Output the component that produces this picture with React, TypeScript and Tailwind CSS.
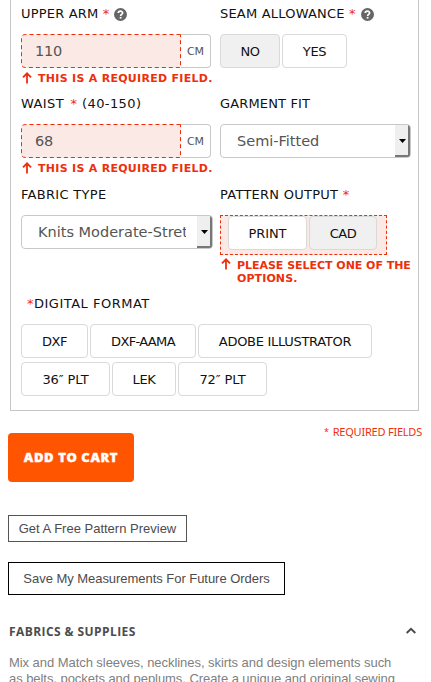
import React from 'react';

const verdana = "font-['DejaVu_Sans',Verdana,sans-serif]";

function Star() {
  return <span className="text-[#ee2f0c]">*</span>;
}

function Label({ children, className = '' }: { children: React.ReactNode; className?: string }) {
  return <div className={`flex h-5 items-center whitespace-pre text-[13px] leading-5 text-[#111] ${className}`}>{children}</div>;
}

function Help() {
  return (
    <svg className="ml-1 mt-px h-[13px] w-[13px]" viewBox="0 0 13 13">
      <circle cx="6.5" cy="6.5" r="6.5" fill="#666" />
      <path d="M4.3 5.1C4.3 2.6 8.6 2.6 8.6 5C8.6 6.4 6.6 6.4 6.6 7.9" fill="none" stroke="#fff" strokeWidth="1.7" />
      <path d="M5.7 8.9h1.8v1.7H5.7z" fill="#fff" />
    </svg>
  );
}

function Arrow() {
  return (
    <svg className="-mt-px h-3 w-[10px] shrink-0" viewBox="0 0 10 12">
      <path d="M5 11.5V1.5M1 5.4L5 1.3L9 5.4" fill="none" stroke="#ee2f0c" strokeWidth="1.8" />
    </svg>
  );
}

function Option({ children, className = '' }: { children: React.ReactNode; className?: string }) {
  return (
    <button className={`flex h-[34px] shrink-0 items-center justify-center whitespace-nowrap rounded-[4px] border border-[#d9d9d9] pt-[2px] text-[13px] text-[#111] ${className}`}>
      {children}
    </button>
  );
}

function Measure({ value }: { value: string }) {
  return (
    <div className="flex h-[34px] w-[190px]">
      <div className="relative flex w-[160px] items-center rounded-l-[4px] bg-[#fbe9e5] pl-[14px] pt-[2px] text-[14.5px] tracking-[-0.2px] text-[#555]">
        <svg className="absolute inset-0 h-full w-full" viewBox="0 0 160 34">
          <path d="M159.5 .5H4.5Q.5 .5 .5 4.5V29.5Q.5 33.5 4.5 33.5H159.5Z" fill="none" stroke="#ee2f0c" strokeDasharray="4 3" />
        </svg>
        {value}
      </div>
      <div className="flex w-[30px] items-center rounded-r-[4px] border border-l-0 border-[#c8c8c8] pl-[6px] pt-[3px] text-[11px] tracking-[-0.2px] text-[#555]">CM</div>
    </div>
  );
}

function Required() {
  return (
    <div className="flex h-5 items-center gap-[6px] pl-[1px] text-[11px] font-bold text-[#ee2f0c]">
      <Arrow />
      <span className="whitespace-nowrap pt-[2px] tracking-[0.29px]">THIS IS A REQUIRED FIELD.</span>
    </div>
  );
}

function Select({ value, className = '' }: { value: string; className?: string }) {
  return (
    <div className={`flex h-[34px] items-stretch overflow-hidden rounded-[4px] border border-[#c8c8c8] ${className}`}>
      <div className="flex min-w-0 flex-1 items-center overflow-hidden whitespace-nowrap pt-[2px] text-[14.5px] text-[#555]">
        <span>{value}</span>
      </div>
      <div className="ml-[11px] flex w-[15px] items-center justify-center border-b-2 border-r-2 border-[#777] bg-[#efefef] pl-px pt-px">
        <svg className="h-[4px] w-[7px]" viewBox="0 0 7 4"><path d="M0 0H7L3.5 4Z" fill="#000" /></svg>
      </div>
    </div>
  );
}

export default function App() {
  return (
    <div className={`h-[682px] w-[431px] overflow-hidden bg-white ${verdana}`}>
      <section className="ml-[10px] flex h-[411px] w-[409px] flex-col border-x border-b border-[#c5c5c5] pl-[10px] pt-1">
        <div className="flex h-[90px]">
          <div className="w-[199px]">
            <Label className="tracking-[0.2px]"><span>UPPER ARM </span><Star /><Help /></Label>
            <div className="mt-[10px]"><Measure value="110" /></div>
            <Required />
          </div>
          <div>
            <Label className="tracking-[0.2px]"><span>SEAM ALLOWANCE </span><Star /><span className="ml-px flex"><Help /></span></Label>
            <div className="mt-[10px] flex gap-[2px]">
              <Option className="w-[60px] bg-[#f0f0f0] tracking-[-0.5px]">NO</Option>
              <Option className="w-[65px] tracking-[-0.3px]">YES</Option>
            </div>
          </div>
        </div>
        <div className="flex h-[90px]">
          <div className="w-[199px]">
            <Label className="tracking-[0.4px]"><span className="mr-[2px]">WAIST </span><Star /><span> (40-150)</span></Label>
            <div className="mt-[10px]"><Measure value="68" /></div>
            <Required />
          </div>
          <div>
            <Label className="tracking-[0.15px]">GARMENT FIT</Label>
            <Select value="Semi-Fitted" className="mt-[10px] w-[191px] pl-[16px]" />
          </div>
        </div>
        <div className="flex h-[110px] pt-px">
          <div className="w-[199px]">
            <Label className="tracking-[0.3px]">FABRIC TYPE</Label>
            <Select value="Knits Moderate-Stretch" className="mt-[10px] w-[192px] pl-[16px]" />
          </div>
          <div>
            <Label className="tracking-[0.26px]"><span>PATTERN OUTPUT </span><Star /></Label>
            <div className="mt-[10px] flex h-10 w-[167px] gap-[2px] border border-dashed border-[#ee2f0c] bg-[#fbe9e5] pl-[7px]">
              <Option className="w-[79px] bg-white tracking-[-0.1px]">PRINT</Option>
              <Option className="w-[68px] bg-[#f0f0f0] tracking-[-0.5px]">CAD</Option>
            </div>
            <div className="mt-1 flex gap-[6px] pl-[1px] text-[11px] font-bold leading-[13px] text-[#ee2f0c]">
              <Arrow />
              <span className="whitespace-nowrap tracking-[-0.03px]">PLEASE SELECT ONE OF THE<br /><span className="tracking-[0.1px]">OPTIONS.</span></span>
            </div>
          </div>
        </div>
        <Label className="pl-[6px] tracking-[0.5px]"><Star /><span>DIGITAL FORMAT</span></Label>
        <div className="mt-[10px] flex gap-[2px]">
          <Option className="w-[67px] tracking-[-0.5px]">DXF</Option>
          <Option className="w-[106px] tracking-[-0.65px]">DXF-AAMA</Option>
          <Option className="w-[174px] tracking-[-0.3px]">ADOBE ILLUSTRATOR</Option>
        </div>
        <div className="mt-1 flex gap-[2px]">
          <Option className="w-[89px] tracking-[-0.1px]">36″ PLT</Option>
          <Option className="w-[64px] tracking-[-0.4px]">LEK</Option>
          <Option className="w-[89px] tracking-[-0.1px]">72″ PLT</Option>
        </div>
      </section>
      <div className="flex h-[104px] items-start justify-between pl-2 pr-[9px]">
        <button className="mt-[22px] h-[49px] w-[126px] rounded-[4px] bg-[#ff5501] font-['Open_Sans',sans-serif] text-[13px] font-extrabold tracking-[0.6px] text-white [-webkit-text-stroke:0.4px_white]">ADD TO CART</button>
        <p className="mt-[12px] flex font-['Noto_Sans',sans-serif] text-[11px] leading-[17px] tracking-[-0.22px] text-[#ee2f0c]"><span className="mr-[4px] text-[9px]">*</span>REQUIRED FIELDS</p>
      </div>
      <div className="flex flex-col items-start pl-2 font-['Liberation_Sans',Arial,sans-serif] text-[#4c4c4c]">
        <button className="h-[27px] w-[179px] border border-[#555] text-[13px]">Get A Free Pattern Preview</button>
        <button className="mt-5 h-[33px] w-[277px] border border-black text-[13px] tracking-[-0.04px]">Save My Measurements For Future Orders</button>
        <div className="mt-[27px] flex h-[20px] w-[408px] items-center justify-between pl-px font-['Open_Sans',sans-serif] text-[12px] font-bold tracking-[0.42px]">
          <span>FABRICS &amp; SUPPLIES</span>
          <svg className="-mt-[4px] h-[7px] w-[10px]" viewBox="0 0 10 7"><path d="M.7 6L5 1.8L9.3 6" fill="none" stroke="#4c4c4c" strokeWidth="2" /></svg>
        </div>
        <p className="mt-[13px] whitespace-nowrap pl-px text-[13px] leading-[15.5px] tracking-[-0.055px] text-[#808080]">
          Mix and Match sleeves, necklines, skirts and design elements such<br />
          as belts, pockets and peplums. Create a unique and original sewing
        </p>
      </div>
    </div>
  );
}
